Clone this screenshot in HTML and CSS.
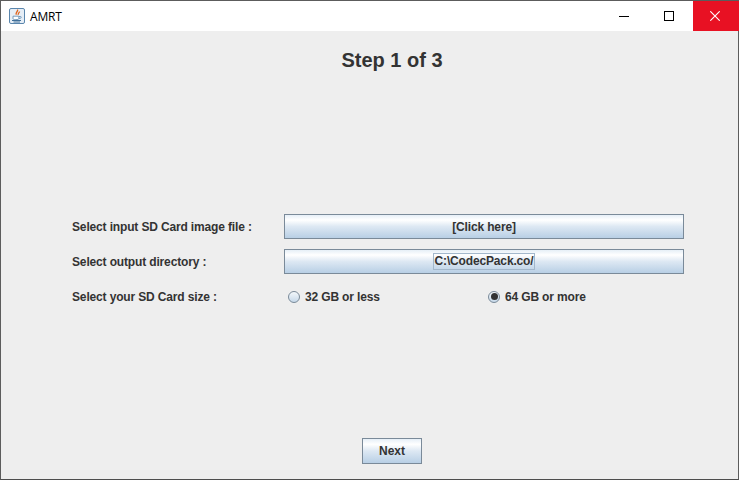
FILE: index.html
```html
<!DOCTYPE html>
<html lang="en">
<head>
    <meta charset="UTF-8">
    <title>AMRT</title>
    <link rel="stylesheet" href="styles.css">
</head>
<body>
    <div class="window">
        <div class="title-bar">
            <svg class="app-icon" width="16" height="16" viewBox="0 0 16 16">
                <rect x="0.5" y="0.5" width="15" height="15" rx="1.5" fill="#e6eef6" stroke="#5a86ad"/>
                <path d="M8.500 1.500c1.200 1.800-2.500 2.800-1.200 5.200M10.500 3.500c0 1.300-2 1.800-1.200 3.400" stroke="#e0641c" stroke-width="1.300" fill="none"/>
                <path d="M4 8.200v2.400c0 .8 1 1 2.800 1s3-.2 3-1V8.200z" fill="#ffffff" stroke="#5a86ad" stroke-width="0.800"/>
                <path d="M10 8.500h1.500c1 0 1 1.500 0 1.700L10 10.500" fill="none" stroke="#5a86ad" stroke-width="0.800"/>
                <path d="M3 12.500h9M4.500 14h6.500" stroke="#3f6f99" stroke-width="1" fill="none"/>
            </svg>
            <span class="app-name">AMRT</span>
            <div class="win-controls">
                <div class="win-btn">
                    <svg width="10" height="10" viewBox="0 0 10 10"><path d="M0 5.500h10" stroke="#000" stroke-width="1"/></svg>
                </div>
                <div class="win-btn win-max">
                    <svg width="10" height="10" viewBox="0 0 10 10"><rect x="0.500" y="0.500" width="9" height="9" fill="none" stroke="#000" stroke-width="1"/></svg>
                </div>
                <div class="win-btn win-close">
                    <svg width="10" height="10" viewBox="0 0 10 10"><path d="M0.300 0.300l9.400 9.400M9.700 0.300l-9.400 9.400" stroke="#fff" stroke-width="1.100"/></svg>
                </div>
            </div>
        </div>

        <div class="content">
            <h1>Step 1 of 3</h1>

            <div class="form">
                <label>Select input SD Card image file :</label>
                <button class="swing-btn" type="button">[Click here]</button>

                <label>Select output directory :</label>
                <button class="swing-btn" type="button"><span class="focus-text">C:\CodecPack.co/</span></button>

                <label>Select your SD Card size :</label>
                <div class="radio-group">
                    <div class="radio-item"><span class="radio"></span>32 GB or less</div>
                    <div class="radio-item"><span class="radio checked"></span>64 GB or more</div>
                </div>
            </div>

            <div class="footer">
                <button class="swing-btn next-btn" type="button">Next</button>
            </div>
        </div>
    </div>
</body>
</html>
```

FILE: styles.css
```css
* {
    margin: 0;
    padding: 0;
    box-sizing: border-box;
}

html, body {
    width: 739px;
    height: 480px;
    overflow: hidden;
}

body {
    font-family: "Liberation Sans", Arial, sans-serif;
    color: #333333;
}

.window {
    width: 739px;
    height: 480px;
    display: flex;
    flex-direction: column;
    background: #eeeeee;
    border: 1px solid #5c5c5c;
    border-bottom-color: #4d4d4d;
}

.title-bar {
    height: 30px;
    flex: none;
    display: flex;
    align-items: center;
    background: #ffffff;
    padding-left: 8px;
}

.app-icon {
    margin-right: 5px;
}

.app-name {
    font-family: "Open Sans", "Liberation Sans", sans-serif;
    font-size: 12px;
    letter-spacing: -0.2px;
    color: #000000;
}

.win-controls {
    margin-left: auto;
    display: flex;
    height: 30px;
    margin-right: -1px;
}

.win-btn {
    width: 46px;
    display: flex;
    align-items: center;
    justify-content: center;
}

.win-max svg,
.win-close svg {
    margin-right: 2px;
}

.win-close {
    background: #e81123;
}

.content {
    flex: 1;
    display: flex;
    flex-direction: column;
    padding-left: 45px;
}

h1 {
    font-size: 20px;
    line-height: 24px;
    font-weight: bold;
    text-align: center;
    margin-top: 17px;
}

.form {
    display: grid;
    grid-template-columns: 212px 400px;
    grid-auto-rows: 25px;
    row-gap: 10px;
    align-items: center;
    margin: 142px 0 0 26px;
    font-size: 12px;
    font-weight: bold;
    letter-spacing: -0.15px;
}

.swing-btn {
    height: 25px;
    border: 1px solid #7a8a99;
    background: linear-gradient(to bottom, #e6eff7 0%, #ffffff 22%, #dde8f3 50%, #b8cfe5 100%);
    font-family: inherit;
    font-size: 12px;
    font-weight: bold;
    letter-spacing: inherit;
    color: #333333;
}

.focus-text {
    display: inline-block;
    padding: 0 1px;
    line-height: 15px;
    border: 1px solid #a3b8cc;
}

.radio-group {
    display: flex;
}

.radio-item {
    width: 200px;
    display: flex;
    align-items: center;
    padding-left: 4px;
}

.radio {
    width: 12px;
    height: 12px;
    margin-right: 5px;
    border-radius: 50%;
    border: 1px solid #7a8a99;
    background: linear-gradient(to bottom, #f4f8fb, #c6d8e9);
    display: flex;
    align-items: center;
    justify-content: center;
}

.radio.checked::after {
    content: "";
    width: 7px;
    height: 7px;
    border-radius: 50%;
    background: #333333;
}

.footer {
    margin-top: auto;
    padding-bottom: 15px;
    display: flex;
    justify-content: center;
}

.next-btn {
    width: 60px;
    height: 26px;
    letter-spacing: 0;
}
```
